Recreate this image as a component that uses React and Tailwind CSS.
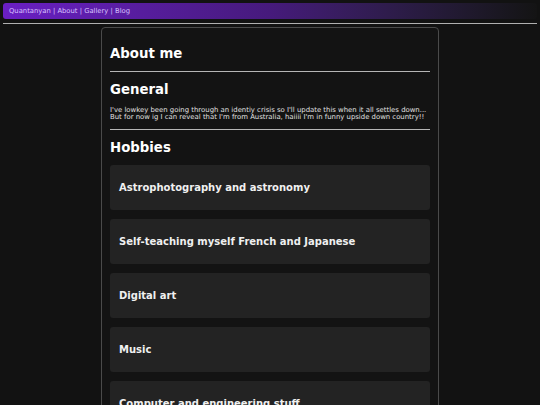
import React from "react";

const hobbies = [
  "Astrophotography and astronomy",
  "Self-teaching myself French and Japanese",
  "Digital art",
  "Music",
  "Computer and engineering stuff",
  "Gaming",
];

function Nav() {
  return (
    <div className="mx-[3px] mt-[3px] h-[16px] rounded-[3px] bg-gradient-to-r from-[#6a1fc4] via-[#461a7c] to-[#141414] flex items-center px-[6px]">
      <span className="text-[6.8px] text-[#d9c2ff]">
        <a>Quantanyan</a> | <a>About</a> | <a>Gallery</a> | <a>Blog</a>
      </span>
    </div>
  );
}

export default function App() {
  return (
    <div
      className="min-h-[405px] bg-[#121212] text-[#e6e6e6] overflow-hidden"
      style={{ fontFamily: '"DejaVu Sans", Verdana, sans-serif' }}
    >
      <Nav />
      <div className="mx-[3px] mt-[4px] border-t border-[#b0b0b0]" />

      {/* main card */}
      <div className="w-[338px] mx-auto mt-[3px] min-h-[400px] border border-[#4a4a4a] rounded-[4px] bg-[#131313] px-[8px] pt-[18px] pb-4">
        <h1 className="text-[13.3px] font-bold text-white leading-[15.5px]">About me</h1>
        <div className="mt-[9px] border-t border-[#b5b5b5]" />

        <h2 className="mt-[10px] text-[13.3px] font-bold text-white leading-[15.5px]">General</h2>
        <p className="mt-[10px] text-[6.9px] leading-[7.2px] text-[#e0e0e0] whitespace-nowrap">
          I've lowkey been going through an identiy crisis so I'll update this when it all settles down...
          <br />
          But for now ig I can reveal that I'm from Australia, haiiii I'm in funny upside down country!!
        </p>
        <div className="mt-[8px] border-t border-[#b5b5b5]" />

        <h2 className="mt-[10px] text-[13.3px] font-bold text-white leading-[15.5px]">Hobbies</h2>
        <div className="mt-[9px] flex flex-col gap-[9px]">
          {hobbies.map((h) => (
            <div
              key={h}
              className="h-[45px] rounded-[3px] bg-[#232323] flex items-center pl-[9px]"
            >
              <span className="text-[10px] font-bold text-[#f0f0f0]">{h}</span>
            </div>
          ))}
        </div>
      </div>
    </div>
  );
}
